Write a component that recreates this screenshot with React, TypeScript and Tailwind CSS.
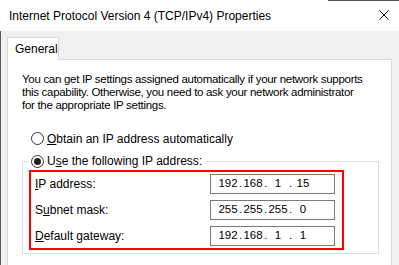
import React from 'react';

const ui = { fontFamily: '"Liberation Sans", Arial, sans-serif' };
const ipFont = { fontFamily: '"Liberation Sans", Tahoma, sans-serif' };

const fields = [
  { key: 'I', rest: 'P address:', octets: ['192', '168', '1', '15'] },
  { key: 'u', pre: 'S', rest: 'bnet mask:', octets: ['255', '255', '255', '0'] },
  { key: 'D', rest: 'efault gateway:', octets: ['192', '168', '1', '1'] },
];

function Radio({ checked }: { checked?: boolean }) {
  return (
    <span className="w-[13px] h-[13px] rounded-full border border-[#333] bg-white flex items-center justify-center shrink-0">
      {checked && <span className="w-[7px] h-[7px] rounded-full bg-[#222]" />}
    </span>
  );
}

function IpBox({ octets }: { octets: string[] }) {
  return (
    <div className="w-[125px] h-[20px] border border-[#7a7a7a] bg-white flex items-center pl-[7px] text-[11.5px] text-black" style={ipFont}>
      {octets.map((o, i) => (
        <React.Fragment key={i}>
          <span className="w-[20px] text-center">{o}</span>
          {i < 3 && <span className="w-[5px] text-center">.</span>}
        </React.Fragment>
      ))}
    </div>
  );
}

export default function App() {
  return (
    <div className="relative w-[399px] h-[265px] overflow-hidden bg-[#f0f0f0] text-black" style={ui}>
      {/* title bar */}
      <div className="h-[31px] bg-white flex items-center justify-between pl-[9px] pr-[10px]">
        <span className="text-[12px]">Internet Protocol Version 4 (TCP/IPv4) Properties</span>
        <svg width="10" height="10" viewBox="0 0 10 10" className="mb-[1px]">
          <path d="M0.5 0.5L9.5 9.5M9.5 0.5L0.5 9.5" stroke="#000" strokeWidth="1" />
        </svg>
      </div>
      <div className="absolute top-0 left-[328px] w-[71px] h-px bg-[#555]" />

      <div className="border-l border-[#5a5a5a] h-full pt-[6px] pl-[6px]">
        {/* tab */}
        <div className="relative z-10 w-[52px] h-[23px] border border-b-0 border-[#d9d9d9] bg-white flex items-center pl-[7px] text-[12px]">
          General
        </div>

        {/* panel */}
        <div className="-mt-px w-[385px] h-[220px] border border-[#d9d9d9] bg-white pl-[14px] pt-[13px]">
          <div className="text-[11.5px] leading-[13px] tracking-[-0.3px] whitespace-nowrap">
            <p>You can get IP settings assigned automatically if your network supports</p>
            <p>this capability. Otherwise, you need to ask your network administrator</p>
            <p>for the appropriate IP settings.</p>
          </div>

          <div className="mt-[20px] ml-[9px] h-[13px] flex items-center gap-[3px] text-[12px]">
            <Radio />
            <span><span className="underline">O</span>btain an IP address automatically</span>
          </div>

          <fieldset className="mt-[9px] w-[357px] h-[100px] border border-[#dcdcdc] px-[6px]">
            <legend className="h-[14px] flex items-center gap-[3px] pl-[2px] pr-[4px] text-[12px]">
              <Radio checked />
              <span>U<span className="underline">s</span>e the following IP address:</span>
            </legend>
            <div className="mt-[2px] w-[315px] h-[80px] border-2 border-[#ff0000] flex flex-col gap-[6px] pt-[2px] pl-[4px] pr-[7px]">
              {fields.map((f, i) => (
                <div key={i} className="flex items-center justify-between text-[12px]">
                  <span>
                    {f.pre}
                    <span className="underline">{f.key}</span>
                    {f.rest}
                  </span>
                  <IpBox octets={f.octets} />
                </div>
              ))}
            </div>
          </fieldset>
        </div>
      </div>
    </div>
  );
}
